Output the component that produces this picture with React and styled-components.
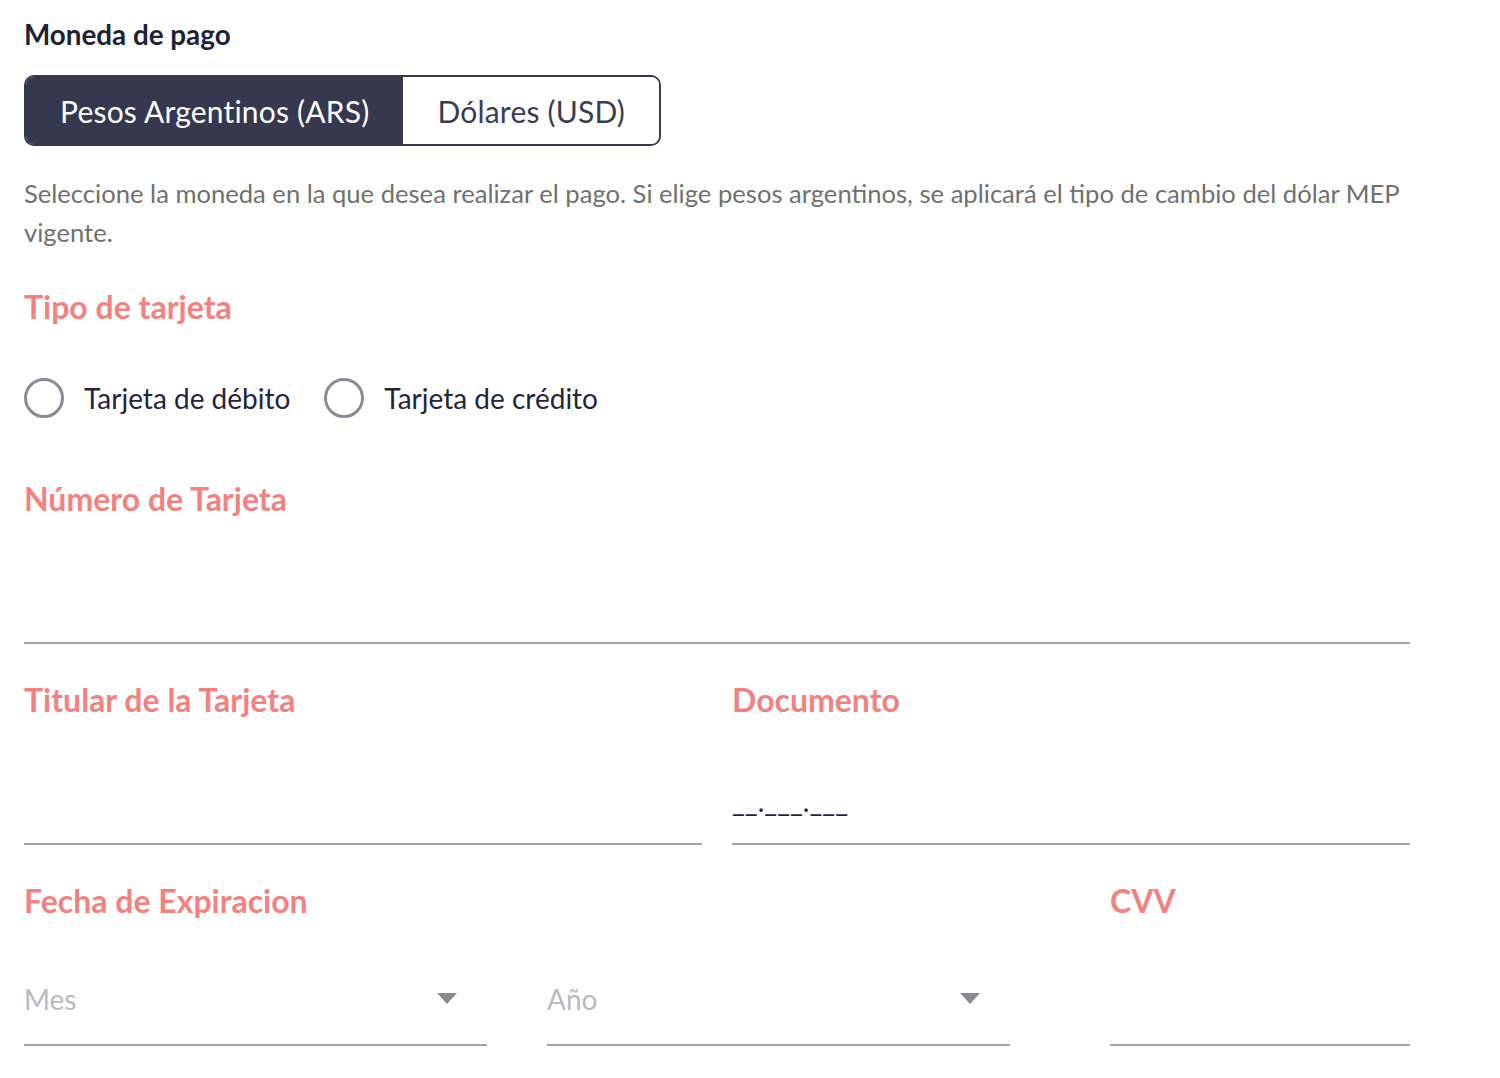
import React from 'react';
import styled, { createGlobalStyle } from 'styled-components';

const GlobalStyle = createGlobalStyle`
  body {
    margin: 0;
    background: #ffffff;
    font-family: Lato, "Noto Sans", sans-serif;
  }
`;

const Page = styled.div`
  width: 1386px;
  padding: 19px 24px 0;
`;

const Title = styled.div`
  font-size: 27.8px;
  line-height: 32px;
  font-weight: 700;
  color: #1f2136;
`;

const Toggle = styled.div`
  display: inline-flex;
  margin-top: 24px;
  border: 2px solid #363850;
  border-radius: 10px;
  overflow: hidden;
`;

const ToggleButton = styled.button`
  height: 67px;
  padding: 0 34px;
  border: none;
  font-family: Lato, "Noto Sans", sans-serif;
  font-size: 30px;
  letter-spacing: 0.2px;
  background: ${(p) => (p.active ? '#363850' : '#ffffff')};
  color: ${(p) => (p.active ? '#ffffff' : '#3a3c51')};
  cursor: pointer;
`;

const Helper = styled.p`
  margin: 28px 0 0;
  font-size: 25.6px;
  line-height: 39px;
  color: #707070;
`;

const SectionLabel = styled.div`
  font-size: 32px;
  line-height: 36px;
  font-weight: 700;
  color: #f2827f;
`;

const CardTypeSection = styled.div`
  margin-top: 37px;
`;

const RadioRow = styled.div`
  display: flex;
  gap: 34px;
  margin-top: 53px;
`;

const RadioOption = styled.label`
  display: flex;
  align-items: center;
  gap: 20px;
  font-size: 28px;
  color: #23253a;
  cursor: pointer;
`;

const RadioCircle = styled.span`
  width: 34px;
  height: 34px;
  border: 3px solid #8a8a99;
  border-radius: 50%;
`;

const Field = styled.div`
  margin-top: ${(p) => p.top || 38}px;
`;

const TextInput = styled.div`
  height: 127px;
  box-sizing: border-box;
  display: flex;
  align-items: flex-end;
  padding-bottom: 25px;
  border-bottom: 2px solid #a3a3ad;
  font-size: 28px;
  line-height: 34px;
  color: #23253a;
`;

const TwoCols = styled.div`
  display: grid;
  grid-template-columns: 1fr 1fr;
  gap: 30px;
`;

const ExpiryRow = styled.div`
  display: grid;
  grid-template-columns: 986px 1fr;
  gap: 100px;
`;

const Selects = styled.div`
  display: grid;
  grid-template-columns: 1fr 1fr;
  gap: 60px;
`;

const Select = styled.div`
  height: 127px;
  box-sizing: border-box;
  display: flex;
  align-items: flex-end;
  justify-content: space-between;
  padding: 0 30px 28px 0;
  border-bottom: 2px solid #a3a3ad;
  font-size: 28px;
  line-height: 34px;
  color: #b9b9c2;
`;

const Caret = styled.svg`
  width: 20px;
  height: 11px;
  margin-bottom: 12px;
`;

const Radio = ({ children }) => (
  <RadioOption>
    <RadioCircle />
    {children}
  </RadioOption>
);

const Dropdown = ({ placeholder }) => (
  <Select>
    <span>{placeholder}</span>
    <Caret viewBox="0 0 20 11">
      <path d="M0 0 H20 L10 11 Z" fill="#8a8a96" />
    </Caret>
  </Select>
);

const App = () => {
  return (
    <Page>
      <GlobalStyle />
      <Title>Moneda de pago</Title>
      <Toggle>
        <ToggleButton active>Pesos Argentinos (ARS)</ToggleButton>
        <ToggleButton>Dólares (USD)</ToggleButton>
      </Toggle>
      <Helper>
        Seleccione la moneda en la que desea realizar el pago. Si elige pesos argentinos, se aplicará el tipo de cambio del dólar MEP vigente.
      </Helper>

      <CardTypeSection>
        <SectionLabel>Tipo de tarjeta</SectionLabel>
        <RadioRow>
          <Radio>Tarjeta de débito</Radio>
          <Radio>Tarjeta de crédito</Radio>
        </RadioRow>
      </CardTypeSection>

      <Field top={63}>
        <SectionLabel>Número de Tarjeta</SectionLabel>
        <TextInput />
      </Field>

      <Field>
        <TwoCols>
          <div>
            <SectionLabel>Titular de la Tarjeta</SectionLabel>
            <TextInput />
          </div>
          <div>
            <SectionLabel>Documento</SectionLabel>
            <TextInput>__.___.___</TextInput>
          </div>
        </TwoCols>
      </Field>

      <Field>
        <ExpiryRow>
          <div>
            <SectionLabel>Fecha de Expiracion</SectionLabel>
            <Selects>
              <Dropdown placeholder="Mes" />
              <Dropdown placeholder="Año" />
            </Selects>
          </div>
          <div>
            <SectionLabel>CVV</SectionLabel>
            <TextInput />
          </div>
        </ExpiryRow>
      </Field>
    </Page>
  );
};

export default App;
